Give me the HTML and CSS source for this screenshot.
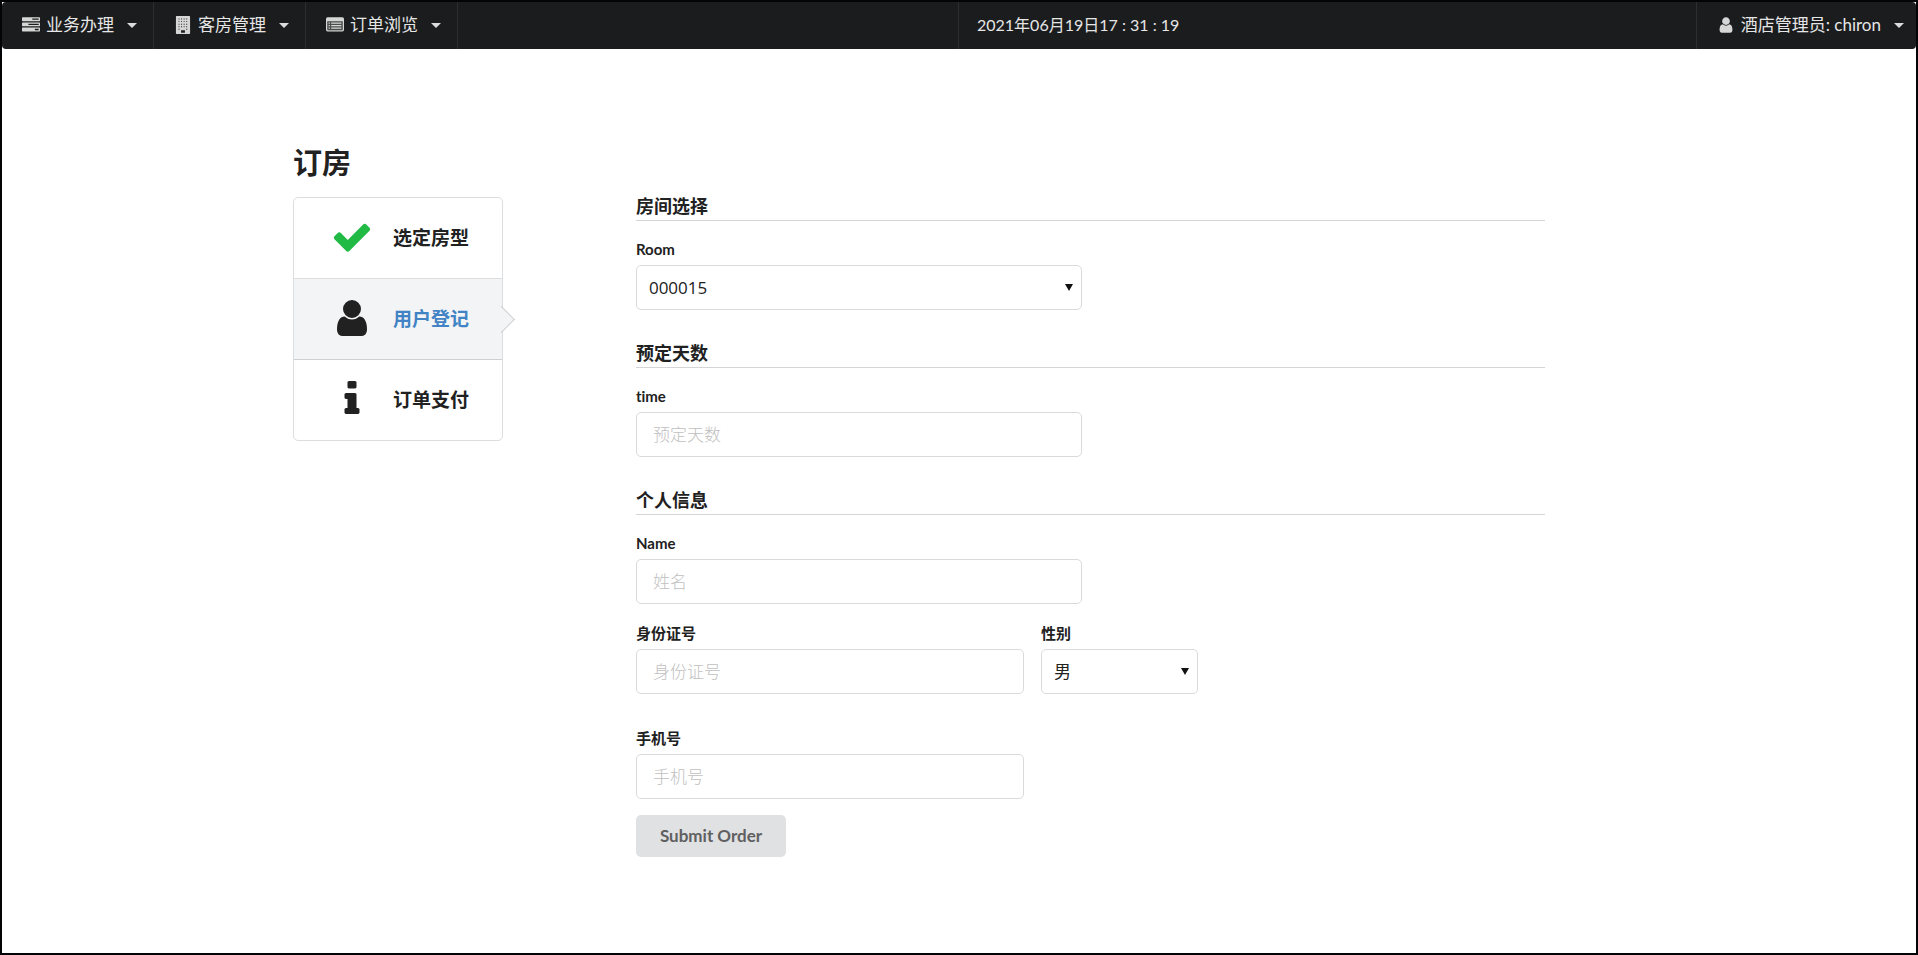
FILE: index.html
```html
<!DOCTYPE html>
<html lang="zh-CN">
<head>
<meta charset="utf-8">
<title>订房</title>
<link rel="stylesheet" href="styles.css">
</head>
<body class="page">
<nav class="menu">
  <div class="menu-left">
    <button class="menu-item" type="button">
      <svg class="menu-icon" viewBox="0 0 1792 1792" aria-hidden="true"><path fill-rule="evenodd" d="M64 128h1664q64 0 64 64v256q0 64-64 64H64q-64 0-64-64V192q0-64 64-64zM1024 256v128h640V256zM64 640h1664q64 0 64 64v256q0 64-64 64H64q-64 0-64-64V704q0-64 64-64zM640 768v128h1024V768zM64 1152h1664q64 0 64 64v256q0 64-64 64H64q-64 0-64-64v-256q0-64 64-64zM1280 1280v128h384v-128z"/></svg>
      <span>业务办理</span><span class="caret"></span>
    </button>
    <button class="menu-item" type="button">
      <svg class="menu-icon" viewBox="0 0 1792 1792" aria-hidden="true"><path fill-rule="evenodd" d="M256 0h1280q64 0 64 64v1664q0 64-64 64H256q-64 0-64-64V64q0-64 64-64zM448 256v96h96v-96zM704 256v96h96v-96zM960 256v96h96v-96zM1216 256v96h96v-96zM448 512v96h96v-96zM704 512v96h96v-96zM960 512v96h96v-96zM1216 512v96h96v-96zM448 768v96h96v-96zM704 768v96h96v-96zM960 768v96h96v-96zM1216 768v96h96v-96zM448 1024v96h96v-96zM704 1024v96h96v-96zM960 1024v96h96v-96zM1216 1024v96h96v-96zM448 1280v96h96v-96zM1216 1280v96h96v-96zM704 1408v256h384v-256z"/></svg>
      <span>客房管理</span><span class="caret"></span>
    </button>
    <button class="menu-item" type="button">
      <svg class="menu-icon" viewBox="0 0 1792 1792" aria-hidden="true"><path fill-rule="evenodd" d="M160 128h1472q160 0 160 160v1088q0 160-160 160H160Q0 1536 0 1376V288Q0 128 160 128zM128 512v832q0 64 64 64h1408q64 0 64-64V512z"/><path opacity=".25" d="M128 512h1536v896H128z"/><path d="M256 640h128v128H256zM512 640h1024v128H512zM256 896h128v128H256zM512 896h1024v128H512zM256 1152h128v128H256zM512 1152h1024v128H512z"/></svg>
      <span>订单浏览</span><span class="caret"></span>
    </button>
  </div>
  <time class="menu-time" datetime="2021-06-19T17:31:19">2021年06月19日17 : 31 : 19</time>
  <button class="menu-item menu-user" type="button">
    <svg class="menu-icon" viewBox="0 0 1792 1792" aria-hidden="true"><path d="M1536 1399q0 109-62.500 187t-150.500 78h-854q-88 0-150.500-78t-62.500-187q0-85 8.500-160.500t31.500-152 58.500-131 94-89 134.500-34.500q131 128 313 128t313-128q76 0 134.500 34.500t94 89 58.500 131 31.500 152 8.500 160.500zM1280 512q0 159-112.500 271.500t-271.500 112.500-271.500-112.500-112.500-271.500 112.500-271.500 271.500-112.500 271.500 112.500 112.500 271.500z"/></svg>
    <span>酒店管理员: chiron</span><span class="caret"></span>
  </button>
</nav>

<main class="content">
  <h1 class="title">订房</h1>
  <div class="columns">
    <ol class="steps">
      <li class="step">
        <svg class="step-icon step-done" viewBox="0 0 1792 1792" aria-hidden="true"><path d="M1671 566q0 40-28 68l-724 724-136 136q-28 28-68 28t-68-28l-136-136-362-362q-28-28-28-68t28-68l136-136q28-28 68-28t68 28l294 295 656-657q28-28 68-28t68 28l136 136q28 28 28 68z"/></svg>
        <span>选定房型</span>
      </li>
      <li class="step step-active" aria-current="step">
        <svg class="step-icon" viewBox="0 0 1792 1792" aria-hidden="true"><path d="M1536 1399q0 109-62.500 187t-150.500 78h-854q-88 0-150.500-78t-62.500-187q0-85 8.500-160.500t31.500-152 58.500-131 94-89 134.500-34.500q131 128 313 128t313-128q76 0 134.500 34.500t94 89 58.500 131 31.500 152 8.500 160.500zM1280 512q0 159-112.500 271.500t-271.500 112.500-271.500-112.500-112.500-271.500 112.500-271.500 271.500-112.500 271.500 112.500 112.500 271.500z"/></svg>
        <span class="step-title">用户登记</span>
      </li>
      <li class="step">
        <svg class="step-icon" viewBox="0 0 1792 1792" aria-hidden="true"><path d="M1216 1344v128q0 26-19 45t-45 19h-512q-26 0-45-19t-19-45v-128q0-26 19-45t45-19h64v-384h-64q-26 0-45-19t-19-45v-128q0-26 19-45t45-19h384q26 0 45 19t19 45v576h64q26 0 45 19t19 45zM1088 192v192q0 26-19 45t-45 19h-256q-26 0-45-19t-19-45v-192q0-26 19-45t45-19h256q26 0 45 19t19 45z"/></svg>
        <span>订单支付</span>
      </li>
    </ol>

    <form class="form">
      <section class="group">
        <h2 class="group-title">房间选择</h2>
        <div class="field field-half">
          <label class="label" for="room">Room</label>
          <select class="control select" id="room"><option>000015</option></select>
        </div>
      </section>
      <section class="group">
        <h2 class="group-title">预定天数</h2>
        <div class="field field-half">
          <label class="label" for="days">time</label>
          <input class="control" id="days" type="text" placeholder="预定天数">
        </div>
      </section>
      <section class="group">
        <h2 class="group-title">个人信息</h2>
        <div class="field field-half">
          <label class="label" for="name">Name</label>
          <input class="control" id="name" type="text" placeholder="姓名">
        </div>
        <div class="field-row">
          <div class="field field-wide">
            <label class="label" for="idcard">身份证号</label>
            <input class="control" id="idcard" type="text" placeholder="身份证号">
          </div>
          <div class="field field-narrow">
            <label class="label" for="gender">性别</label>
            <select class="control select" id="gender"><option>男</option><option>女</option></select>
          </div>
        </div>
      </section>
      <div class="group group-last">
        <div class="field field-wide">
          <label class="label" for="phone">手机号</label>
          <input class="control" id="phone" type="text" placeholder="手机号">
        </div>
      </div>
      <button class="submit" type="submit">Submit Order</button>
    </form>
  </div>
</main>
</body>
</html>
```

FILE: styles.css
```css
* {
  box-sizing: border-box;
}

.page {
  margin: 0;
  min-height: 100vh;
  border: 2px solid #030405;
  background: #fff;
  color: #212121;
  font-family: Lato, "Noto Sans CJK SC", sans-serif;
  font-size: 17px;
  font-variant-ligatures: none;
  line-height: 20px;
}

.menu {
  display: flex;
  height: 47px;
  border-radius: 4px;
  background: #1b1c1d;
  color: #e6e6e6;
}

.menu-left {
  display: flex;
  width: 50%;
  border-right: 1px solid #2d2e2f;
}

.menu-item {
  display: flex;
  align-items: center;
  padding: 0 16px 2px 20px;
  border: 0;
  border-right: 1px solid #2d2e2f;
  background: none;
  color: inherit;
  font: inherit;
  white-space: nowrap;
}

.menu-icon {
  width: 18px;
  height: 18px;
  margin-right: 6px;
  fill: #d6d6d6;
}

.caret {
  width: 10px;
  height: 5px;
  margin: 2px 0 0 13px;
  background: #dcdcdc;
  clip-path: polygon(0 0, 100% 0, 50% 100%);
}

.menu-time {
  padding: 0 18px;
  font-size: 16px;
  line-height: 46px;
}

.menu-user {
  margin-left: auto;
  padding-right: 12px;
  border-right: 0;
  border-left: 1px solid #2d2e2f;
}

.content {
  padding: 96px 19.4% 48px 15.2%;
}

.title {
  margin: 0 0 16px;
  font-size: 29px;
  line-height: 36px;
}

.columns {
  display: grid;
  grid-template-columns: 210px 1fr;
  gap: 133px;
  align-items: start;
}

.steps {
  margin: 0;
  padding: 0;
  border: 1px solid #dcddde;
  border-radius: 5px;
  list-style: none;
}

.step {
  position: relative;
  display: flex;
  align-items: center;
  gap: 20px;
  height: 81px;
  padding: 0 0 0 37px;
  border-bottom: 1px solid #dcddde;
  font-size: 19px;
  font-weight: 700;
}

.step:last-child {
  height: 80px;
  border-bottom: 0;
}

.step-active {
  border-bottom-color: #cfd0d1;
  background: #f3f4f5;
}

.step-active::after {
  content: "";
  position: absolute;
  top: 31px;
  right: -9px;
  width: 18px;
  height: 18px;
  border: solid #cfd0d1;
  border-width: 1px 1px 0 0;
  background: linear-gradient(45deg, transparent 50%, #f3f4f5 50%);
  transform: rotate(45deg);
}

.step-title {
  color: #4183c4;
}

.step-icon {
  width: 42px;
  height: 42px;
  margin-bottom: 2px;
  fill: #212121;
}

.step-done {
  fill: #21ba45;
}

.group {
  margin-bottom: 34px;
}

.group-last {
  margin-bottom: 16px;
}

.group-title {
  margin: 0 0 18px;
  padding-bottom: 5px;
  border-bottom: 1px solid #d4d5d6;
  font-size: 18px;
  line-height: 18px;
}

.field-row {
  display: flex;
  gap: 17px;
  margin-top: 19px;
}

.field-half {
  width: 49.1%;
}

.field-wide {
  width: 42.7%;
}

.field-narrow {
  width: 17.3%;
}

.label {
  display: block;
  margin-bottom: 6px;
  font-size: 15px;
  font-weight: 700;
}

.control {
  display: block;
  width: 100%;
  height: 45px;
  padding: 0 16px;
  border: 1px solid #d9dadb;
  border-radius: 5px;
  background: #fff;
  color: #212121;
  font: inherit;
}

.control::placeholder {
  color: #bfbfbf;
  font-weight: 300;
  opacity: 1;
}

.select {
  padding: 0 12px;
  appearance: none;
  background: #fff url("data:image/svg+xml,%3Csvg xmlns='http://www.w3.org/2000/svg' width='8' height='7'%3E%3Cpath d='M0 0h8L4 7z' fill='%23111'/%3E%3C/svg%3E") no-repeat right 8px center;
  font-family: "Open Sans", "Noto Sans CJK SC", sans-serif;
}

.submit {
  display: block;
  height: 42px;
  padding: 0 24px;
  border: 0;
  border-radius: 5px;
  background: #e0e1e2;
  color: #5f6061;
  font: inherit;
  font-weight: 700;
}
```
